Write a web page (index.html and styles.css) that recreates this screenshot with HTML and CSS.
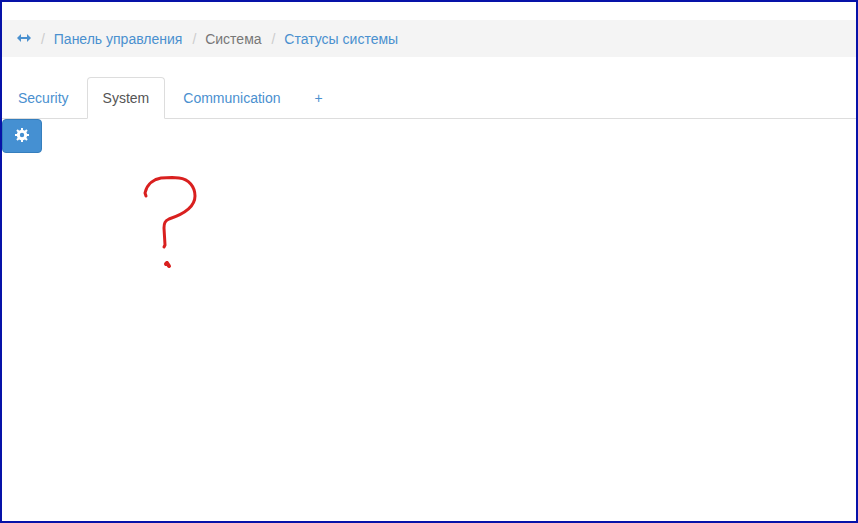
FILE: index.html
```html
<!DOCTYPE html>
<html lang="ru">
<head>
<meta charset="utf-8">
<title>Статусы системы</title>
<link rel="stylesheet" href="styles.css">
</head>
<body>
<nav>
  <ol class="breadcrumb">
    <li><a href="#" aria-label="Развернуть"><svg class="icon" viewBox="0 0 14 10" aria-hidden="true"><path d="M0 5L4 1V4H10V1L14 5L10 9V6H4V9Z"/></svg></a></li>
    <li><a href="#">Панель управления</a></li>
    <li class="current">Система</li>
    <li><a href="#">Статусы системы</a></li>
  </ol>
</nav>
<main>
  <ul class="tabs">
    <li><a href="#">Security</a></li>
    <li><a href="#" class="active">System</a></li>
    <li><a href="#">Communication</a></li>
    <li><a href="#">+</a></li>
  </ul>
  <button class="settings" type="button" aria-label="Настройки"><svg class="icon" viewBox="-7 -7 14 14" aria-hidden="true"><circle class="ring" r="3.700"/><path class="teeth" d="M0-4V-7M0 4V7M-4 0H-7M4 0H7M3-3L5-5M-3-3L-5-5M3 3L5 5M-3 3L-5 5"/></svg></button>
</main>
<svg class="note" viewBox="0 0 80 110" aria-hidden="true">
  <path d="M20 34L19 31C21 21 29 17 35 16L46 15.500L53 16C63 17 69 25 69 34C69 46 55 53 43 57C39 59 38 61 38 66L39 83L38 85"/>
  <path class="dot" d="M41 101L43 104M40 102L41 101L43 104"/>
</svg>
</body>
</html>
```

FILE: styles.css
```css
* {
  box-sizing: border-box;
}

body {
  margin: 0;
  min-height: 100vh;
  padding-top: 18px;
  border: 2px solid #0612a8;
  position: relative;
  background: #fff;
  color: #333;
  font: 14px/20px "Liberation Sans", Arial, sans-serif;
}

a {
  color: #4a90cf;
  text-decoration: none;
}

.icon {
  display: block;
  width: 14px;
  fill: currentColor;
}

.breadcrumb {
  display: flex;
  flex-wrap: wrap;
  gap: 5px;
  margin: 0 0 20px;
  padding: 9px 15px 8px;
  list-style: none;
  background: #f4f4f4;
}

.breadcrumb li {
  display: flex;
}

.breadcrumb .icon {
  height: 18px;
}

.breadcrumb li + li::before {
  content: "/\00a0";
  padding: 0 5px;
  color: #ccc;
}

.breadcrumb .current {
  color: #777;
}

.tabs {
  display: flex;
  gap: 2px;
  margin: 0;
  padding: 0;
  list-style: none;
  border-bottom: 1px solid #ddd;
}

.tabs a {
  display: block;
  margin-bottom: -1px;
  padding: 10px 15px;
  border: 1px solid transparent;
  border-radius: 4px 4px 0 0;
}

.tabs .active {
  color: #555;
  background: #fff;
  border-color: #ddd;
  border-bottom-color: #fff;
}

.settings {
  display: block;
  padding: 8px 12px 10px;
  border: 1px solid #357ebd;
  border-radius: 4px;
  background: #4590d2;
  color: #fff;
}

.settings .icon {
  height: 14px;
}

.ring {
  fill: none;
  stroke: currentColor;
  stroke-width: 3;
}

.teeth {
  fill: none;
  stroke: currentColor;
  stroke-width: 2;
}

.note {
  position: absolute;
  left: 124px;
  top: 160px;
  width: 80px;
  height: 110px;
  fill: none;
  stroke: #d9201f;
  stroke-width: 3;
  stroke-linecap: round;
  stroke-linejoin: round;
}

.dot {
  stroke-width: 4;
}
```
